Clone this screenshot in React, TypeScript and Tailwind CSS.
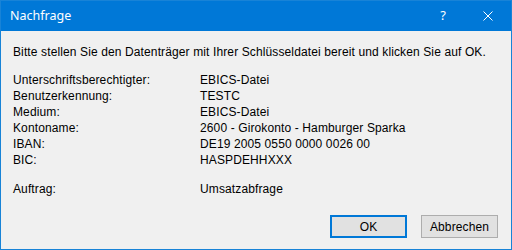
import React from "react";

const rows: [string, string][] = [
  ["Unterschriftsberechtigter:", "EBICS-Datei"],
  ["Benutzerkennung:", "TESTC"],
  ["Medium:", "EBICS-Datei"],
  ["Kontoname:", "2600 - Girokonto - Hamburger Sparka"],
  ["IBAN:", "DE19 2005 0550 0000 0026 00"],
  ["BIC:", "HASPDEHHXXX"],
];

export default function App() {
  return (
    <div className="w-[512px] h-[250px] border border-[#1883d7] bg-[#f0f0f0] flex flex-col overflow-hidden">
      <div className="h-[30px] bg-[#0078d7] flex items-center text-white shrink-0">
        <span className="pl-[9px] text-[12.5px] font-['Noto_Sans',sans-serif] flex-1">Nachfrage</span>
        <span className="w-[46px] text-center text-[13px] font-['Noto_Sans',sans-serif] pl-[2px]">?</span>
        <span className="w-[46px] flex justify-center">
          <svg width="10" height="10" viewBox="0 0 10 10">
            <path d="M0.5 0.5 L9.5 9.5 M9.5 0.5 L0.5 9.5" stroke="white" strokeWidth="1" />
          </svg>
        </span>
      </div>
      <div className="flex-1 flex flex-col font-['Liberation_Sans',Arial,sans-serif] text-[12px] leading-[16px] tracking-[0.12px] text-black pl-[12px]">
        <div className="mt-[13px]">Bitte stellen Sie den Datenträger mit Ihrer Schlüsseldatei bereit und klicken Sie auf OK.</div>
        <div className="mt-[12px] flex flex-col">
          {rows.map(([l, v]) => (
            <div key={l} className="flex">
              <span className="w-[187px]">{l}</span>
              <span>{v}</span>
            </div>
          ))}
        </div>
        <div className="mt-[13px] flex">
          <span className="w-[187px]">Auftrag:</span>
          <span>Umsatzabfrage</span>
        </div>
        <div className="mt-auto mb-[11px] flex justify-end gap-[14px] pr-[13px]">
          <button className="w-[77px] h-[23px] border-2 border-[#0078d7] bg-[#e1e1e1] text-[12px]">OK</button>
          <button className="w-[77px] h-[23px] border border-[#adadad] bg-[#e1e1e1] text-[12px]">Abbrechen</button>
        </div>
      </div>
    </div>
  );
}
